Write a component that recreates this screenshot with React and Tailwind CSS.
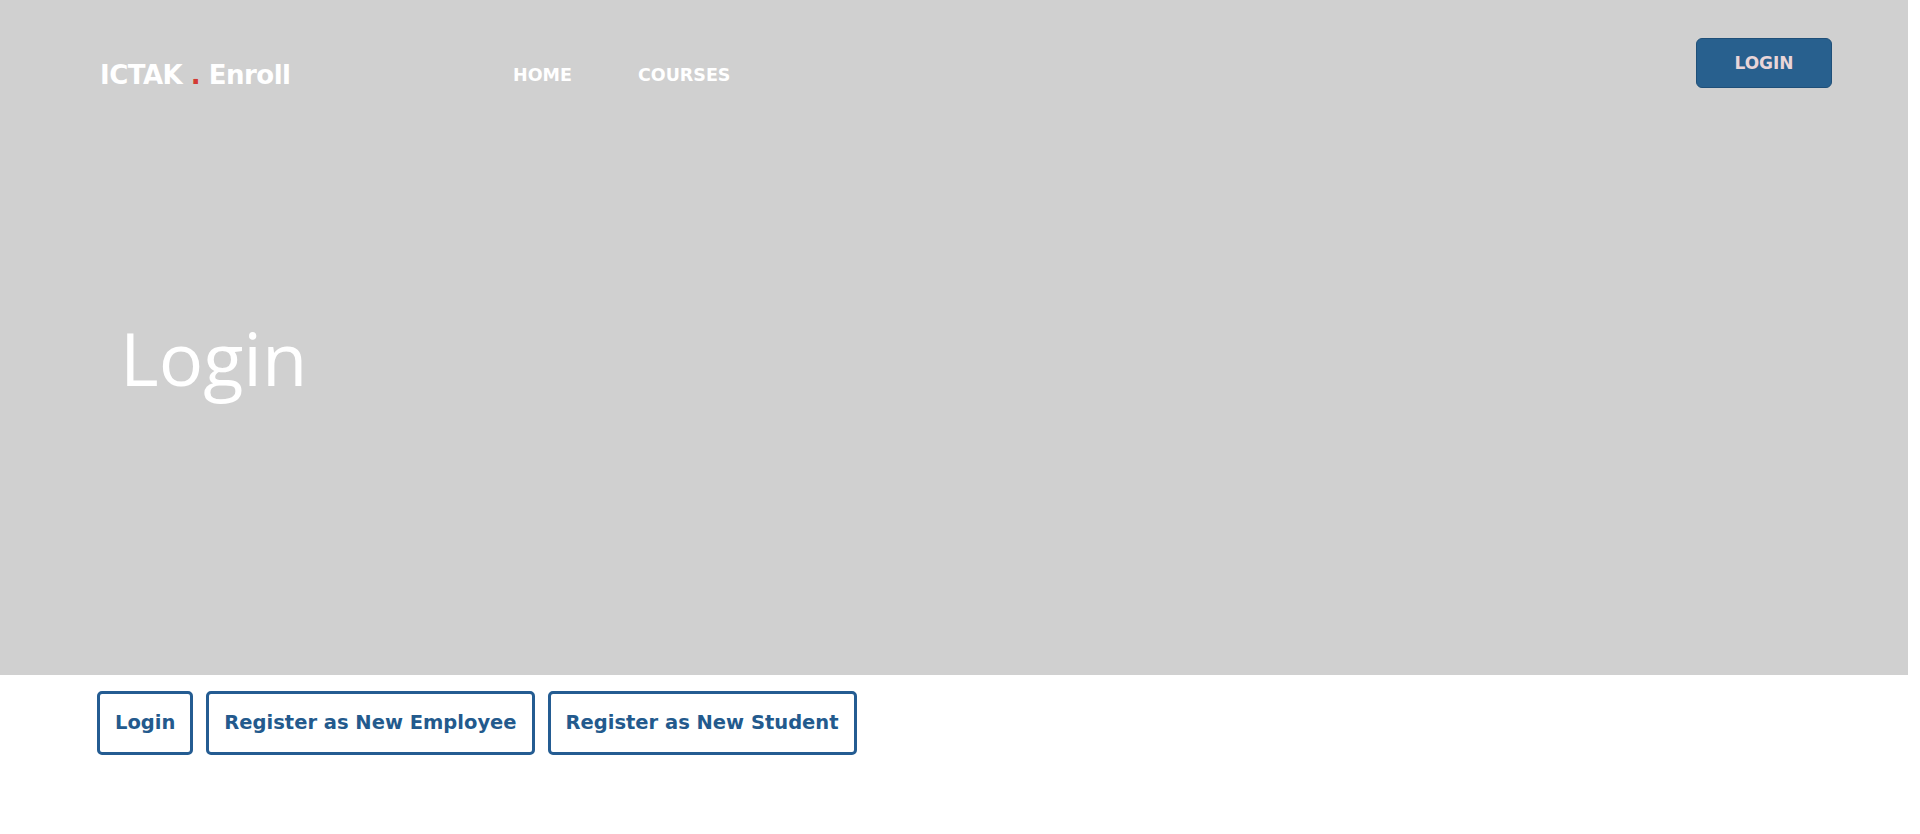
export default function App() {
  const mont = { fontFamily: '"DejaVu Sans", "Open Sans", sans-serif' };
  const btn =
    "h-[64px] px-[15px] border-[3px] border-[#245c92] rounded-[5px] text-[#235a8d] text-[19.5px] font-bold whitespace-nowrap";
  return (
    <div className="w-[1920px] h-[834px] bg-white overflow-hidden" style={mont}>
      <section className="w-[1908px] h-[675px] bg-[#d0d0d0] flex flex-col">
        <header className="flex items-start pl-[100px] pr-[76px] pt-[38px]">
          <div className="w-[413px] pt-[24px] text-[26px] font-bold text-white leading-none tracking-[-0.5px] whitespace-nowrap">
            ICTAK <span className="text-[#d33a34]">.</span> Enroll
          </div>
          <nav className="flex gap-[66px] pt-[29px] text-[17.5px] font-bold text-white leading-none">
            <a>HOME</a>
            <a>COURSES</a>
          </nav>
          <button className="ml-auto w-[136px] h-[50px] rounded-[6px] bg-[#28608e] border border-[#1f4f78] text-[#e9d5d8] text-[17px] font-bold leading-none">
            LOGIN
          </button>
        </header>
        <h1
          className="pl-[120px] mt-[233px] text-[74px] text-white leading-none font-normal"
          style={{ fontFamily: '"Open Sans", Lato, sans-serif' }}
        >
          Login
        </h1>
      </section>
      <div className="flex gap-[13px] pl-[97px] pt-[16px]">
        <button className={btn}>Login</button>
        <button className={btn}>Register as New Employee</button>
        <button className={btn}>Register as New Student</button>
      </div>
    </div>
  );
}
